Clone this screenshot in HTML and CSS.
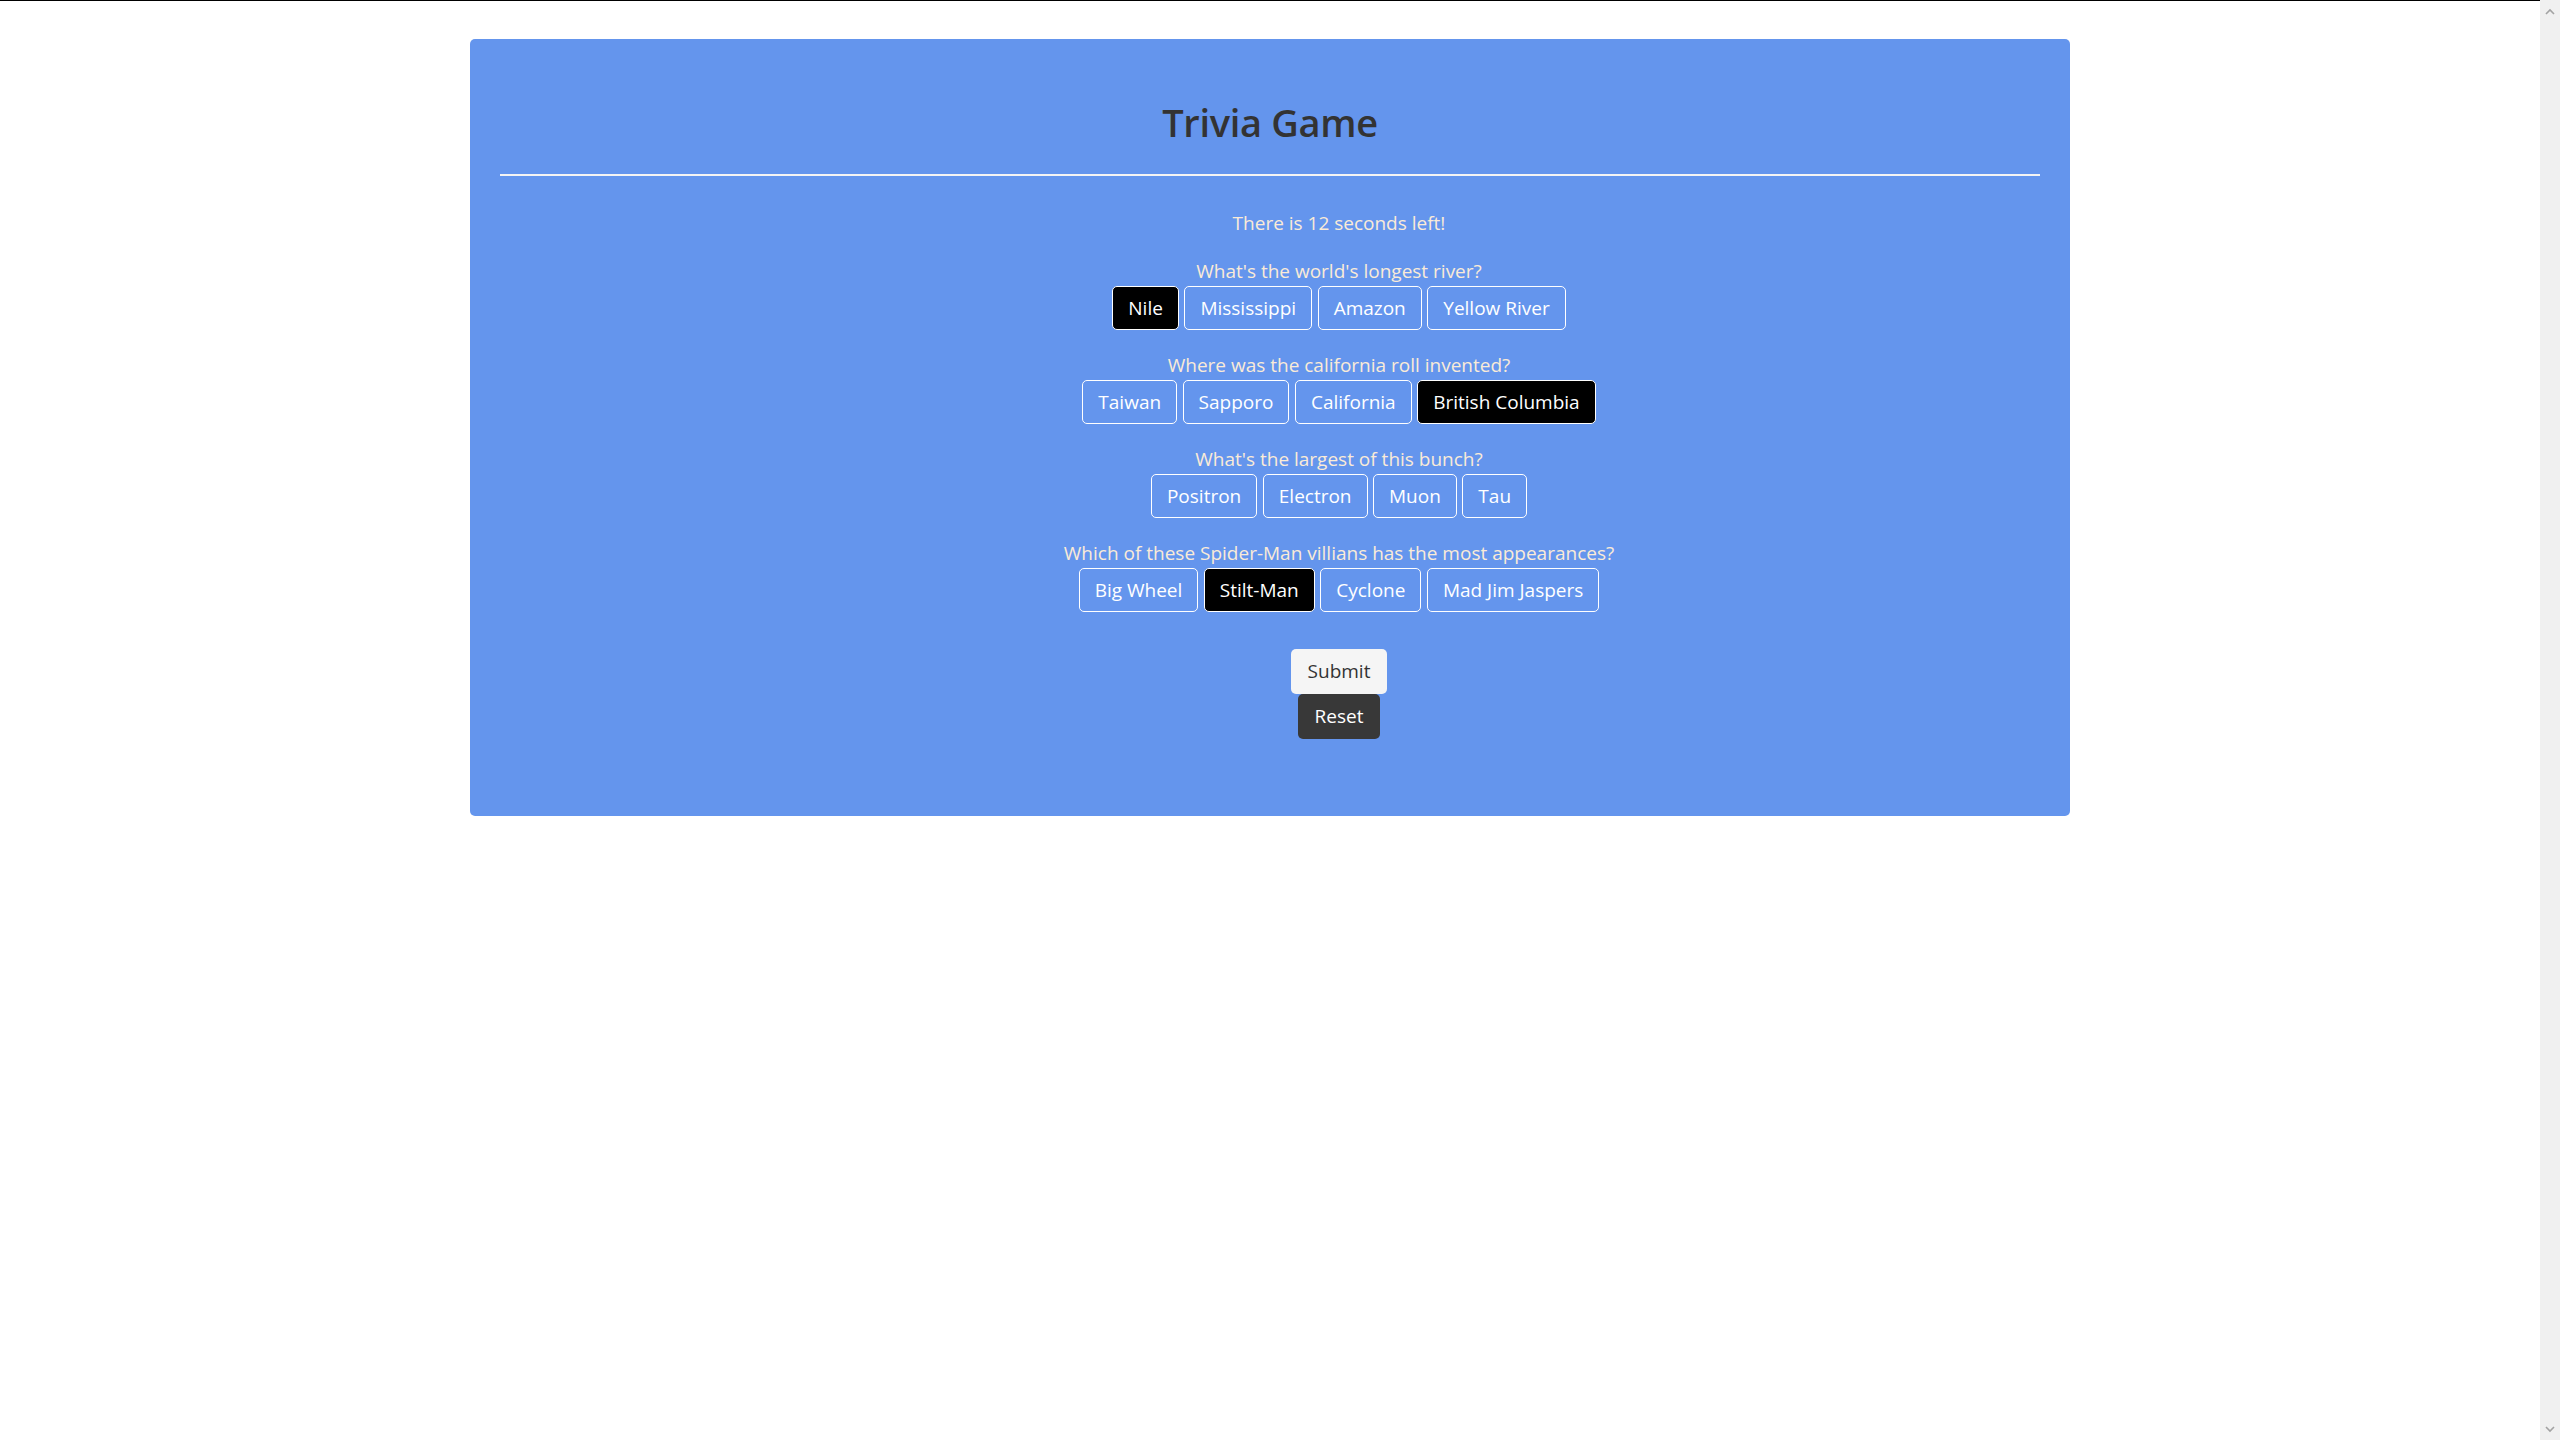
FILE: index.html
```html
<!DOCTYPE html>
<html lang="en">
<head>
<meta charset="utf-8">
<title>Trivia Game</title>
<link rel="stylesheet" href="styles.css">
</head>
<body>
<div class="window">
  <main class="viewport">
    <div class="card">
      <h2 class="title">Trivia Game</h2>
      <hr class="divider">
      <section class="quiz">
        <p class="timer">There is 12 seconds left!</p>

        <div class="question">
          <p class="q-text">What's the world's longest river?</p>
          <div class="answers">
            <button class="answer selected">Nile</button>
            <button class="answer">Mississippi</button>
            <button class="answer">Amazon</button>
            <button class="answer">Yellow River</button>
          </div>
        </div>

        <div class="question">
          <p class="q-text">Where was the california roll invented?</p>
          <div class="answers">
            <button class="answer">Taiwan</button>
            <button class="answer">Sapporo</button>
            <button class="answer">California</button>
            <button class="answer selected">British Columbia</button>
          </div>
        </div>

        <div class="question">
          <p class="q-text">What's the largest of this bunch?</p>
          <div class="answers">
            <button class="answer">Positron</button>
            <button class="answer">Electron</button>
            <button class="answer">Muon</button>
            <button class="answer">Tau</button>
          </div>
        </div>

        <div class="question">
          <p class="q-text">Which of these Spider-Man villians has the most appearances?</p>
          <div class="answers">
            <button class="answer">Big Wheel</button>
            <button class="answer selected">Stilt-Man</button>
            <button class="answer">Cyclone</button>
            <button class="answer">Mad Jim Jaspers</button>
          </div>
        </div>

        <div class="actions">
          <button class="btn btn-light">Submit</button>
          <button class="btn btn-dark">Reset</button>
        </div>
      </section>
    </div>
  </main>
  <aside class="scrollbar">
    <svg class="arrow" width="10" height="7" viewBox="0 0 10 7"><path d="M1 6 L5 2 L9 6" fill="none" stroke="#a3a3a3" stroke-width="1.6"/></svg>
    <svg class="arrow" width="10" height="7" viewBox="0 0 10 7"><path d="M1 1 L5 5 L9 1" fill="none" stroke="#a3a3a3" stroke-width="1.6"/></svg>
  </aside>
</div>
</body>
</html>
```

FILE: styles.css
```css
html, body {
  margin: 0;
  padding: 0;
  background: #ffffff;
}

body {
  font-family: "Open Sans", "Noto Sans", "Liberation Sans", sans-serif;
  font-size: 19px;
  line-height: 30px;
  overflow: hidden;
}

.window {
  display: flex;
  height: 100vh;
}

.viewport {
  flex: 1;
  border-top: 1px solid #000;
  padding-top: 38px;
}

.scrollbar {
  width: 20px;
  background: #f0f0f0;
  display: flex;
  flex-direction: column;
  justify-content: space-between;
  align-items: center;
  padding: 8px 0 7px;
  box-sizing: border-box;
}

.arrow {
  display: block;
}

.card {
  width: 1600px;
  margin: 0 auto;
  box-sizing: border-box;
  background: #6495ed;
  border-radius: 5px;
  padding: 60px 30px 77px;
}

.title {
  margin: 0;
  text-align: center;
  font-size: 38px;
  line-height: 46px;
  font-weight: 600;
  letter-spacing: -0.3px;
  color: #333333;
}

.divider {
  margin: 29px 0 0;
  border: 0;
  border-top: 2px solid #f4f4f4;
  height: 0;
}

.quiz {
  margin-left: 138px;
  padding-top: 32px;
  text-align: center;
}

.timer {
  margin: 0 0 18px;
  color: #faebd7;
}

.question {
  margin-bottom: 20px;
}

.q-text {
  margin: 0;
  color: #faebd7;
}

.answers {
  display: flex;
  justify-content: center;
  gap: 5.5px;
}

.answer {
  font-family: inherit;
  font-size: 19px;
  line-height: 26px;
  padding: 8px 15px;
  border: 1px solid #ffffff;
  border-radius: 5px;
  background: transparent;
  color: #ffffff;
  margin: 0;
}

.answer.selected {
  background: #000000;
}

.actions {
  display: flex;
  flex-direction: column;
  align-items: center;
  padding-top: 17px;
}

.btn {
  font-family: inherit;
  font-size: 19px;
  line-height: 31px;
  padding: 7px 17px;
  border: 0;
  border-radius: 5px;
  margin: 0;
}

.btn-light {
  background: #f5f5f5;
  color: #333333;
}

.btn-dark {
  background: #383838;
  color: #ffffff;
}
```
